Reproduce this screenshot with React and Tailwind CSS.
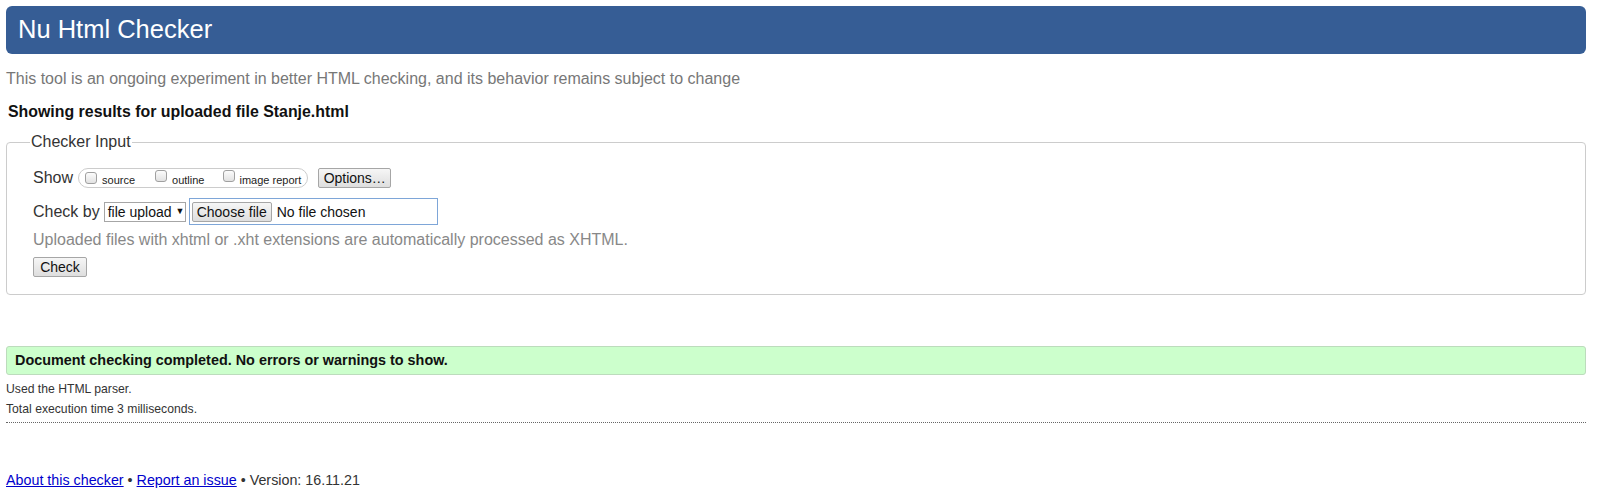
import React from 'react';

const font = { fontFamily: '"Liberation Sans", Arial, sans-serif' };

function Box() {
  return (
    <span className="inline-block w-[12px] h-[12px] rounded-[3px] border border-[#a0a0a0] bg-gradient-to-b from-[#fcfcfc] to-[#e2e2e2] shrink-0" />
  );
}

function Btn({ children, className = '' }) {
  return (
    <span className={`inline-flex items-center justify-center h-[20px] border border-[#a6a6a6] rounded-[2px] bg-gradient-to-b from-[#f6f6f6] to-[#dedede] text-[14px] text-[#111] leading-none ${className}`}>
      {children}
    </span>
  );
}

export default function App() {
  return (
    <div className="bg-white min-h-screen pt-[6px] pl-[6px] pr-[12px] text-[#333]" style={font}>
      {/* title bar */}
      <div className="h-[48px] rounded-[6px] bg-[#365d95] flex items-center pl-[12px]">
        <h1 className="text-[25.5px] text-white leading-none font-normal">Nu Html Checker</h1>
      </div>

      <p className="mt-[16px] text-[16px] leading-[18px] text-[#777]">
        This tool is an ongoing experiment in better HTML checking, and its behavior remains subject to change
      </p>
      <p className="mt-[15px] pl-[2px] text-[15.9px] leading-[17px] font-bold text-[#111]">
        Showing results for uploaded file Stanje.html
      </p>

      <fieldset className="mt-[13px] border border-[#cccccc] rounded-[4px] px-[26px] pt-[17px] pb-[17px]">
        <legend className="ml-[-3px] px-[1px] text-[16px] leading-[18px] text-[#333]">Checker Input</legend>

        {/* show row */}
        <div className="flex items-center h-[20px]">
          <span className="text-[16px] leading-none mr-[5px]">Show</span>
          <div className="h-[20px] flex items-center border border-[#cccccc] rounded-full pl-[6px] pr-[6px] text-[11px] text-[#222]">
            <Box />
            <span className="ml-[5px] mt-[4px]">source</span>
            <span className="ml-[20px]"><Box /></span>
            <span className="ml-[5px] mt-[4px]">outline</span>
            <span className="ml-[19px]"><Box /></span>
            <span className="ml-[4px] mt-[4px]">image report</span>
          </div>
          <Btn className="ml-[10px] w-[73px]">Options…</Btn>
        </div>

        {/* check by row */}
        <div className="flex items-center h-[27px] mt-[10px]">
          <span className="text-[16px] leading-none mr-[4px]">Check by</span>
          <span className="h-[20px] w-[82px] flex items-center border border-[#a6a6a6] bg-white pl-[3px] text-[14px] text-[#111] leading-none">
            file upload
            <span className="ml-[4px] text-[9px]">▼</span>
          </span>
          <div className="ml-[3px] h-[27px] w-[249px] border border-[#7ea6d8] flex items-center pl-[2px]">
            <Btn className="w-[80px]">Choose file</Btn>
            <span className="ml-[5px] text-[14px] text-[#111] leading-none">No file chosen</span>
          </div>
        </div>

        <p className="mt-[6px] text-[16px] leading-[18px] text-[#888]">
          Uploaded files with xhtml or .xht extensions are automatically processed as XHTML.
        </p>

        <div className="mt-[8px] flex">
          <Btn className="w-[54px]">Check</Btn>
        </div>
      </fieldset>

      {/* result */}
      <div className="mt-[51px] h-[29px] border border-[#bcdcbc] rounded-[3px] bg-[#ccffcc] flex items-center pl-[8px]">
        <span className="text-[14.4px] font-bold text-[#111] leading-none">
          Document checking completed. No errors or warnings to show.
        </span>
      </div>

      <div className="mt-[4px] text-[12.2px] leading-[20px] text-[#333]">
        <p>Used the HTML parser.</p>
        <p>Total execution time 3 milliseconds.</p>
      </div>
      <div className="mt-[3px] border-t border-dotted border-[#666]" />

      <p className="mt-[48px] text-[14.3px] leading-[18px] text-[#333]">
        <a href="#" className="text-[#0000cc] underline">About this checker</a>
        {' • '}
        <a href="#" className="text-[#0000cc] underline">Report an issue</a>
        {' • Version: 16.11.21'}
      </p>
    </div>
  );
}
